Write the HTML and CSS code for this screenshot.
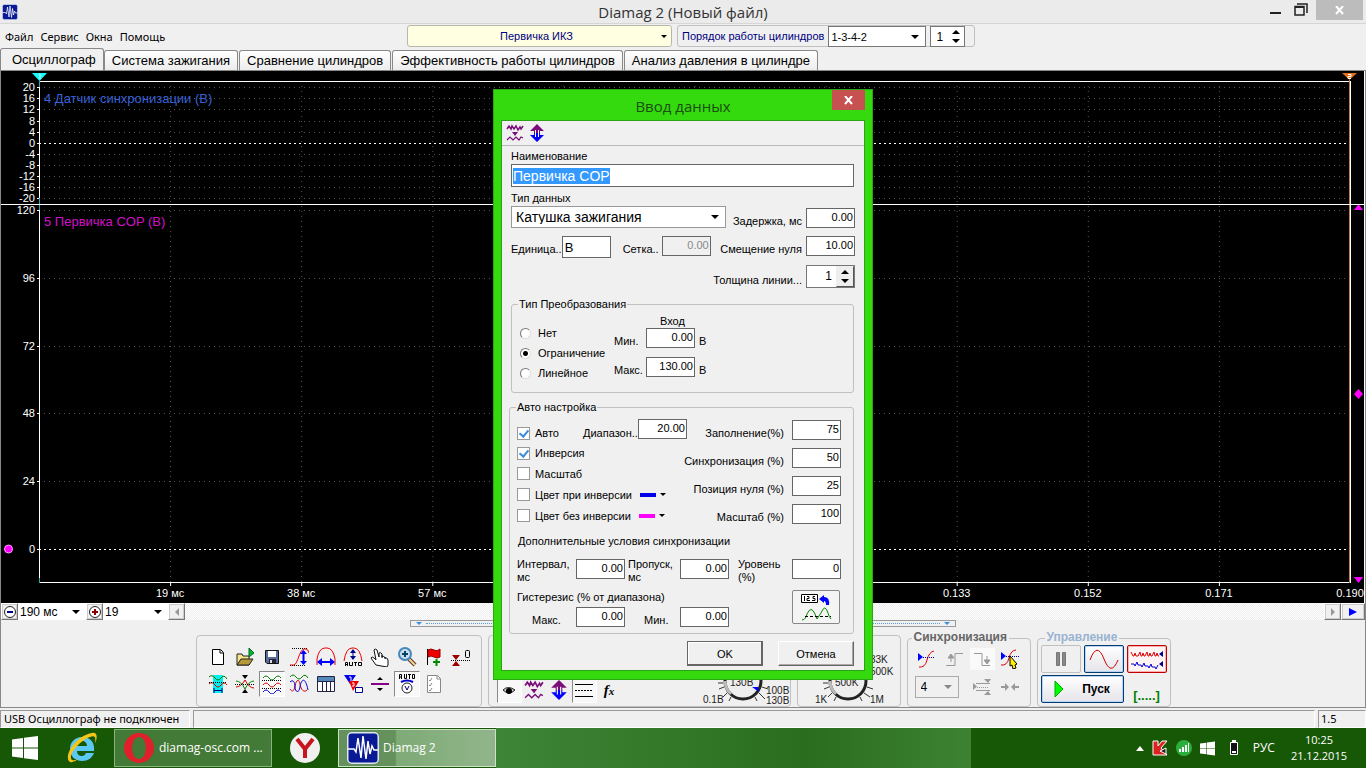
FILE: index.html
```html
<!DOCTYPE html>
<html lang="ru">
<head>
<meta charset="utf-8">
<title>Diamag 2 (Новый файл)</title>
<link rel="stylesheet" href="styles.css">
</head>
<body>
<svg class="defs" aria-hidden="true">
  <symbol id="i-waves" viewBox="0 0 18 18"><path d="M1 5l2-3 2 3 1-3 2 3 2-3 2 4 2-3 1 2 2-3" fill="none" stroke="#7a0d7a" stroke-width="1.500"/><path d="M6 8h6l-3 4z" fill="#7a0d7a"/><path d="M1 16l3-3 3 3 3-3 3 3 2-3 2 1" fill="none" stroke="#7a0d7a" stroke-width="1.2"/></symbol>
  <symbol id="i-updown" viewBox="0 0 18 18"><path d="M9 0l7 7h-4v2H6V7H2z" fill="#7a0d7a"/><path d="M9 18l7-7h-4V9H6v2H2z" fill="#00f"/><path d="M7 6h1v7H7zM10 6h1v7h-1z" fill="#fff"/></symbol>
  <symbol id="i-win" viewBox="0 0 26 24"><path d="M0 3.500l11-1.500v9.500H0zM12 1.800L26 0v11.500H12zM0 12.500h11V22L0 20.500zM12 12.500h14V24l-14-1.800z" fill="#fff"/></symbol>
  <symbol id="i-app" viewBox="0 0 32 32"><rect x=".75" y=".75" width="30.500" height="30.500" rx="4" fill="#0a1a94" stroke="#dfe4f2" stroke-width="1.500"/><path d="M1 17h6l2 3 2-14 3 20 2-22 3 23 2-18 2 13 2-8 2 4h4" fill="none" stroke="#fff" stroke-width="1.500"/></symbol>
</svg>

<header class="titlebar">
  <svg class="titlebar-icon" viewBox="0 0 32 32"><use href="#i-app"/></svg>
  <h1>Diamag 2 (Новый файл)</h1>
  <div class="window-buttons">
    <button class="win-btn" aria-label="Свернуть"><svg width="12" height="16"><path d="M1 10h11v2H1z" fill="#222"/></svg></button>
    <button class="win-btn" aria-label="Развернуть"><svg width="14" height="14"><path d="M3 1h10v9M1 3.500h9V12H1z" fill="none" stroke="#222" stroke-width="1.500"/><path d="M1 3h9v2H1z" fill="#222"/></svg></button>
    <button class="win-btn win-close" aria-label="Закрыть"><svg width="10" height="9"><path d="M1 0l7 8M8 0L1 8" stroke="#fff" stroke-width="2"/></svg></button>
  </div>
</header>

<div class="toolbar">
  <nav class="menu"><a href="#">Файл</a><a href="#">Сервис</a><a href="#">Окна</a><a href="#">Помощь</a></nav>
  <button class="preset"><span>Первичка ИКЗ</span><i class="arrow small"></i></button>
  <div class="order">
    <label for="order">Порядок работы цилиндров</label>
    <span class="select order-select"><select id="order"><option>1-3-4-2</option></select></span>
    <span class="spin"><input id="cyl" aria-label="Цилиндр" value="1"><i class="spin-arrows"></i></span>
  </div>
</div>

<div class="tabs" role="tablist">
  <button role="tab" class="tab active">Осциллограф</button>
  <button role="tab" class="tab">Система зажигания</button>
  <button role="tab" class="tab">Сравнение цилиндров</button>
  <button role="tab" class="tab">Эффективность работы цилиндров</button>
  <button role="tab" class="tab">Анализ давления в цилиндре</button>
</div>

<main class="scope">
  <svg class="plot" role="img" aria-label="Осциллограмма">
    <g class="axis y-axis">
      <text x="34" y="20">20</text><text x="34" y="31">16</text><text x="34" y="42">12</text><text x="34" y="54">8</text><text x="34" y="65">4</text><text x="34" y="76">0</text><text x="34" y="87">-4</text><text x="34" y="98">-8</text><text x="34" y="109">-12</text><text x="34" y="120">-16</text><text x="34" y="131">-20</text>
      <text x="34" y="143">120</text><text x="34" y="211">96</text><text x="34" y="279">72</text><text x="34" y="346">48</text><text x="34" y="414">24</text><text x="34" y="482">0</text>
    </g>
    <path class="frame" d="M36 16.500h3M36 27.500h3M36 38.500h3M36 50.500h3M36 61.500h3M36 72.500h3M36 83.500h3M36 94.500h3M36 105.500h3M36 116.500h3M36 127.500h3M36 139.500h3M36 207.500h3M36 275.500h3M36 342.500h3M36 410.500h3M36 478.500h3"/>
    <svg class="area" x="38" y="0" height="532">
      <g class="grid">
        <line x2="100%" y1="16.500" y2="16.500"/><line x2="100%" y1="27.500" y2="27.500"/><line x2="100%" y1="38.500" y2="38.500"/><line x2="100%" y1="50.500" y2="50.500"/><line x2="100%" y1="61.500" y2="61.500"/><line x2="100%" y1="83.500" y2="83.500"/><line x2="100%" y1="94.500" y2="94.500"/><line x2="100%" y1="105.500" y2="105.500"/><line x2="100%" y1="116.500" y2="116.500"/><line x2="100%" y1="127.500" y2="127.500"/><line x2="100%" y1="139.500" y2="139.500"/><line x2="100%" y1="207.500" y2="207.500"/><line x2="100%" y1="275.500" y2="275.500"/><line x2="100%" y1="342.500" y2="342.500"/><line x2="100%" y1="410.500" y2="410.500"/>
        <g transform="translate(.5)"><line x1="10%" x2="10%" y1="15" y2="511"/><line x1="20%" x2="20%" y1="15" y2="511"/><line x1="30%" x2="30%" y1="15" y2="511"/><line x1="40%" x2="40%" y1="15" y2="511"/><line x1="50%" x2="50%" y1="15" y2="511"/><line x1="60%" x2="60%" y1="15" y2="511"/><line x1="70%" x2="70%" y1="15" y2="511"/><line x1="80%" x2="80%" y1="15" y2="511"/><line x1="90%" x2="90%" y1="15" y2="511"/></g>
      </g>
      <g class="zero"><line x2="100%" y1="72.500" y2="72.500"/><line x2="100%" y1="478.500" y2="478.500"/></g>
      <g class="frame"><line x2="100%" y1="10.500" y2="10.500"/><line x2="100%" y1="511.500" y2="511.500"/><line x1=".5" x2=".5" y1="10" y2="512"/></g>
      <g class="frame" transform="translate(.5)"><line x1="100%" x2="100%" y1="10" y2="512"/><line x1="10%" x2="10%" y1="511" y2="515"/><line x1="20%" x2="20%" y1="511" y2="515"/><line x1="30%" x2="30%" y1="511" y2="515"/><line x1="70%" x2="70%" y1="511" y2="515"/><line x1="80%" x2="80%" y1="511" y2="515"/><line x1="90%" x2="90%" y1="511" y2="515"/></g>
      <g class="axis x-axis"><text x="10%" y="526">19 мс</text><text x="20%" y="526">38 мс</text><text x="30%" y="526">57 мс</text><text x="70%" y="526">0.133</text><text x="80%" y="526">0.152</text><text x="90%" y="526">0.171</text><text x="100%" y="526">0.190</text></g>
      <text class="channel ch4" x="5" y="32">4 Датчик синхронизации (В)</text>
      <text class="channel ch5" x="5" y="155">5 Первичка COP (В)</text>
      <path d="M-7 2H8L.5 10z" fill="#1ff"/><path d="M0 3h1v5" stroke="#fff" fill="none"/><path d="M.5 10v6M.5 127v12M.5 507v5" stroke="#2aa"/>
      <svg x="100%" overflow="visible"><path d="M-.5 9v503" stroke="#c87850"/><path d="M-8 2H7l-7.500 7z" fill="#e07020"/><path d="M-2 3.500h3v2h-3v2h3" stroke="#fff" fill="none"/><path d="M4 139h9l-4.500-6zM4 506h9l-4.500 6zM4 323l4.500-5 4.500 5-4.500 5z" fill="#f0f"/></svg>
    </svg>
    <line class="frame" x1="0" x2="100%" y1="133.500" y2="133.500"/>
    <circle cx="7.500" cy="478" r="4" fill="#f0f" stroke="#ffa0ff"/>
  </svg>

  <div class="scroll-row">
    <button class="bevel" aria-label="Уменьшить"><svg width="14" height="14"><circle cx="7" cy="7" r="5.500" fill="#fff" stroke="#222"/><path d="M4 6h6v2H4z" fill="#008"/></svg></button>
    <span class="select flat scale-select"><select aria-label="Масштаб времени"><option>190  мс</option></select></span>
    <button class="bevel" aria-label="Увеличить"><svg width="14" height="14"><circle cx="7" cy="7" r="5.500" fill="#fff" stroke="#222"/><path d="M4 6h6v2H4zM6 4h2v6H6z" fill="#800"/></svg></button>
    <span class="select flat step-select"><select aria-label="Шаг"><option>19</option></select></span>
    <button class="bevel" aria-label="Влево"><svg width="8" height="8"><path d="M6 0v8L2 4z" fill="#999"/></svg></button>
    <div class="track"></div>
    <button class="bevel" aria-label="Вправо"><svg width="8" height="8"><path d="M2 0v8l4-4z" fill="#999"/></svg></button>
    <button class="bevel wide" aria-label="В конец"><svg width="8" height="8"><path d="M0 0v8l8-4z" fill="#00f"/></svg></button>
  </div>

  <div class="bottom">
    <div class="splitter"><i></i><b></b><i></i></div>
    <div class="groups">
      <section class="group tools">
        <button aria-label="Новый"><svg viewBox="0 0 20 20"><path d="M4.500 2.500h8l3 3v12h-11z" fill="#fff" stroke="#000"/><path d="M12 3v3h3" fill="none" stroke="#000"/></svg></button>
        <button aria-label="Открыть"><svg viewBox="0 0 20 20"><path d="M2 18V7h5l1 2h6v9z" fill="#f4e48a" stroke="#222"/><path d="M2 18l4-6h12l-4 6z" fill="#b59a3a" stroke="#222"/><path d="M14 1v9l5-4z" fill="#0b2" stroke="#063"/></svg></button>
        <button aria-label="Сохранить"><svg viewBox="0 0 20 20"><path d="M3.500 3.500h13v13H5l-1.500-1.500z" fill="#5a6c9c" stroke="#111"/><path d="M6 4h8v6H6z" fill="#fff"/><path d="M7 12h7v4H7z" fill="#223"/><path d="M8 13h2v3H8z" fill="#ddd"/></svg></button>
        <button aria-label="Масштаб по высоте"><svg viewBox="0 0 20 20"><path d="M3 1.500h16M1 18.500h15" stroke="#000" stroke-dasharray="1 1"/><path d="M1 18h4c4-1 5-15 10-16h2q2 0 3 4" fill="none" stroke="#e00"/><path d="M14.500 4v12" stroke="#00f" stroke-width="2"/><path d="M11 7h7l-3.500-4zM11 14h7l-3.500 4z" fill="#00f"/></svg></button>
        <button aria-label="Масштаб по ширине"><svg viewBox="0 0 20 20"><path d="M1 18V12Q3 1 9 1h2q6 0 8 11v6" fill="none" stroke="#e00"/><path d="M4 15h12" stroke="#00f" stroke-width="2"/><path d="M6 11v8l-5-4zM14 11v8l5-4z" fill="#00f"/></svg></button>
        <button aria-label="Авто"><svg viewBox="0 0 20 20"><path d="M1 14Q3 1 9 1h2q6 0 8 13" fill="none" stroke="#e00"/><path d="M10 3v9" stroke="#008"/><path d="M7 6h6l-3-4zM7 9h6l-3 4z" fill="#008"/><path d="M2.500 19v-3.500h2V19M2.500 17.500h2M6.500 15v3.500h3V15M11 15.500h3M12.500 15v4M15.500 15.500h3v3h-3z" fill="none" stroke="#000"/></svg></button>
        <button aria-label="Рука"><svg viewBox="0 0 20 20"><path d="M6 18l-5-7q1-2 3 0l2 2-2-10q1-2 3 0l2 7V6q2-1 3 1v3q2-2 3 1 2-1 3 2v5l-1 2z" fill="#fff" stroke="#111"/><path d="M12 8v3M15 10v2" stroke="#111"/></svg></button>
        <button aria-label="Лупа"><svg viewBox="0 0 20 20"><path d="M12 12l6 6" stroke="#633" stroke-width="4"/><path d="M12 12l6 6" stroke="#ed8" stroke-width="2"/><circle cx="8" cy="7" r="6" fill="#cde" stroke="#48b" stroke-width="2"/><path d="M5 7h6M8 4v6" stroke="#046" stroke-width="2"/></svg></button>
        <button aria-label="Маркер"><svg viewBox="0 0 20 20"><path d="M3.500 2v16" stroke="#000"/><path d="M4 3q3-2 6 0t6-1v8q-3 2-6 0t-6 0z" fill="#e00" stroke="#900"/><path d="M9 15h7M12.500 12v7" stroke="#080" stroke-width="2"/></svg></button>
        <button aria-label="Ноль"><svg viewBox="0 0 20 20"><path d="M1 8h8l-4 5zM1 19h8l-4-5z" fill="#900"/><path d="M0 13.500h20" stroke="#000" stroke-dasharray="1 1"/><rect x="14.500" y="3.500" width="4" height="7" rx="1" fill="none" stroke="#000"/></svg></button>
        <button aria-label="Выделение"><svg viewBox="0 0 20 20"><path d="M5 1h10v18H5z" fill="#0ee"/><path d="M1 3q3-3 6 1t6 0 6 1" fill="none" stroke="#070"/><path d="M1 10q3-3 6 1t6 0 6 0" fill="none" stroke="#c00"/><path d="M1 8.500h18" stroke="#000" stroke-dasharray="1 1"/><path d="M6 14v5M14 14v5M6 16.500h8" stroke="#008"/></svg></button>
        <button aria-label="Инверсия"><svg viewBox="0 0 20 20"><path d="M1 13q5 0 9-7 4 8 9 8" fill="none" stroke="#c00"/><path d="M1 7q5 0 9 8 4-8 9-8" fill="none" stroke="#080"/><path d="M0 10.500h20" stroke="#000" stroke-dasharray="1 1"/><path d="M7 1h6l-3 4zM7 19h6l-3-4z" fill="#000"/></svg></button>
        <button class="pressed" aria-label="Раздельно"><svg viewBox="0 0 20 20"><path d="M1 4q3-4 6 0t6 0 6 0" fill="none" stroke="#070"/><path d="M1 11q3-4 6 0t6 0 6 0" fill="none" stroke="#d00"/><path d="M1 18q3-4 6 0t6 0 6 0" fill="none" stroke="#00d"/><path d="M0 6.500h20M0 14.500h20" stroke="#000" stroke-dasharray="1 1"/></svg></button>
        <button aria-label="Совместно"><svg viewBox="0 0 20 20"><path d="M1 3q3-4 6 0t6 0 6 1" fill="none" stroke="#070"/><path d="M1 15C3 18 5 18 6 12s4-8 5-2 4 9 7 6" fill="none" stroke="#d00"/><path d="M1 8c3-3 5 0 5 5s4 7 5 0 5-12 8 3" fill="none" stroke="#00d"/></svg></button>
        <button aria-label="Таблица"><svg viewBox="0 0 20 20"><path d="M1.500 2.500h17v15h-17z" fill="#fff" stroke="#224"/><path d="M2 3h16v4H2z" fill="#58b"/><path d="M2 7.500h16M6.500 7v10M10.500 7v10M14.500 7v10" stroke="#224"/></svg></button>
        <button aria-label="Маркеры"><svg viewBox="0 0 20 20"><path d="M1 1h12L7 10z" fill="#00e"/><path d="M6 7h10l-6 10z" fill="#e00"/><path d="M6 3h2v4M9 9h2v3h-2" fill="none" stroke="#fff"/><path d="M12.500 13.500h7v5h-7z" fill="#fff" stroke="#008"/></svg></button>
        <button aria-label="Разделитель"><svg viewBox="0 0 20 20"><path d="M1 9h18v2H1z" fill="#808"/><path d="M7 6h6l-3-3zM7 14h6l-3 3z" fill="#000"/></svg></button>
        <button class="pressed" aria-label="Авто синхронизация"><svg viewBox="0 0 20 20"><path d="M2.500 5V.500h2V5M2.500 3h2M7.500 0v4.500h2V0M11 .500h3M12.500 0v5M15.500.500h2v4h-2z" fill="none" stroke="#000"/><path d="M4 8q6-3 12 0" fill="none" stroke="#00c" stroke-width="2"/><circle cx="10" cy="14" r="5" fill="#fff" stroke="#222"/><path d="M8 12l2 4 2-4" fill="none" stroke="#008"/></svg></button>
        <button aria-label="Список"><svg viewBox="0 0 20 20"><path d="M3.500 1.500h10l3 3v14h-13z" fill="#fff" stroke="#888"/><path d="M5 6l1 1 2-3M5 11l1 1 2-3M5 16l1 1 2-3M13 2v3h3" fill="none" stroke="#888"/></svg></button>
      </section>

      <section class="group view">
        <button class="pressed" aria-label="Показать"><svg viewBox="0 0 20 20"><path d="M4 10q5-5 12 0-6 6-12 0z" fill="#ccc" stroke="#222"/><circle cx="10" cy="11" r="3" fill="#000"/></svg></button>
        <button aria-label="Усреднение"><svg><use href="#i-waves"/></svg></button>
        <button aria-label="Растянуть"><svg><use href="#i-updown"/></svg></button>
        <button class="pressed" aria-label="Линии"><svg viewBox="0 0 20 20"><path d="M1 4.500h18M1 16.500h18" stroke="#000"/><path d="M1 10.500h18" stroke="#000" stroke-dasharray="2 1"/></svg></button>
        <button class="fx"><span>f<small>x</small></span></button>
        <svg class="knob" viewBox="0 0 100 70">
          <circle cx="50" cy="45" r="18" class="knob-ring"/><path d="M32 45A18 18 0 0 0 38 58" class="knob-hi"/>
          <path d="M30 47h-5M31 51l-5 2M34 57l-4 4M38 61l-2 4M66 57l6 6M69 51l6 2M62 61l2 4" class="knob-ticks"/><path d="M66 56l-7-5h6z" fill="#00f"/>
          <text x="37" y="50">130В</text><text x="10" y="67">0.1В</text><text x="73" y="58">100В</text><text x="73" y="68">130В</text>
        </svg>
      </section>

      <section class="group input">
        <svg class="knob" viewBox="0 0 100 70">
          <circle cx="50" cy="45" r="18" class="knob-ring"/><path d="M32 45A18 18 0 0 0 38 58" class="knob-hi"/>
          <path d="M30 47h-5M31 51l-5 2M34 57l-4 4M38 61l-2 4M66 57l6 4M69 51l6 2M62 61l2 4" class="knob-ticks"/>
          <text x="37" y="50">500K</text><text x="17" y="67">1K</text><text x="72" y="67">1М</text><text x="72" y="27">33K</text><text x="72" y="39">500K</text>
        </svg>
      </section>

      <fieldset class="group sync">
        <legend>Синхронизация</legend>
        <div class="sync-row">
          <button aria-label="Фронт"><svg viewBox="0 0 20 20"><path d="M2 18q6 1 8-7t7-9" fill="none" stroke="#d00"/><path d="M1 4v8l5-4z" fill="#00f"/><path d="M6 8.500h12" stroke="#00a" stroke-dasharray="1 1"/></svg></button>
          <button aria-label="По нарастанию"><svg viewBox="0 0 20 20"><path d="M1 16.500h9v-12h8M10 4" fill="none" stroke="#999"/><path d="M3 9l3-4 3 4zM6 8v5" fill="#999" stroke="#999"/></svg></button>
          <button class="dither" aria-label="По спаду"><svg viewBox="0 0 20 20"><path d="M2 4.500h8v12h8" fill="none" stroke="#999"/><path d="M12 11l3 4 3-4zM15 7v5" fill="#999" stroke="#999"/></svg></button>
          <button aria-label="Указать"><svg viewBox="0 0 20 20"><path d="M1 16q6 1 8-7t7-8" fill="none" stroke="#d00"/><path d="M1 3v8l5-4z" fill="#00f"/><path d="M6 7.500h13" stroke="#00a" stroke-dasharray="1 1"/><path d="M10 7l7 8-2 1 1 3-3 1-1-4-2 1z" fill="#fe0" stroke="#000"/></svg></button>
        </div>
        <div class="sync-row">
          <span class="select sync-select"><select aria-label="Канал"><option>4</option></select></span>
          <button aria-label="Уровень"><svg viewBox="0 0 20 20"><path d="M1 6v7l4-3.500zM12 2h7l-3 4zM12 18h7l-3-4z" fill="#999"/><path d="M4 6.500h14M4 13.500h14" stroke="#999"/><path d="M5 10.500h12" stroke="#999" stroke-dasharray="1 1"/></svg></button>
          <button aria-label="Сдвинуть"><svg viewBox="0 0 20 20"><path d="M1 9h4V6l4 4-4 4v-3H1zM19 9h-4V6l-4 4 4 4v-3h4z" fill="#999"/></svg></button>
        </div>
      </fieldset>

      <fieldset class="group control">
        <legend>Управление</legend>
        <button class="ctl off" aria-label="Пауза"><svg width="12" height="16"><path d="M1.500 1.500h3v13h-3zM7.500 1.500h3v13h-3z" fill="#888" stroke="#777"/></svg></button>
        <button class="ctl" aria-label="Один кадр"><svg width="30" height="20"><path d="M1 11Q8-8 15 10t14 1" fill="none" stroke="#c00"/></svg></button>
        <button class="ctl red" aria-label="Самописец"><svg width="34" height="20"><path d="M1 3l2 4h1l1-3 1 3h2l2-4 1 4h1l1-3 1 3h1l2-4 1 4h1l1-3 1 3h1l2-4 1 4h1l1-3 1 3h1" fill="none" stroke="#d00"/><path d="M1 15h3l1 2 2-4 1 3h3l1 2 2-4 1 3h3l1 2 2-4 1 3h3l1 2 2-4" fill="none" stroke="#00d"/><path d="M33 2v6l-4-3zM33 12v6l-4-3z" fill="#008"/></svg></button>
        <button class="ctl start"><svg width="10" height="18"><path d="M1 1v16l8-8z" fill="#0f0" stroke="#0a0"/></svg><span>Пуск</span></button>
        <button class="range">[.....]</button>
      </fieldset>
    </div>
  </div>
</main>

<footer class="status"><span class="cell first">USB Осциллограф не подключен</span><span class="cell mid"></span><span class="cell last">1.5</span></footer>

<div class="taskbar">
  <button class="task-icon start-btn" aria-label="Пуск"><svg width="26" height="24"><use href="#i-win"/></svg></button>
  <button class="task-icon ie" aria-label="Internet Explorer"><svg width="32" height="32" viewBox="0 0 32 32"><path d="M16 5C9 5 4 10 4 17s5 12 12 12c6 0 10-3 12-8h-8c-1 2-2 3-4 3-3 0-5-2-5-5h17C29 10 24 5 16 5zm-5 9c0-3 2-5 5-5s5 2 5 5z" fill="#5cc8f4" fill-rule="evenodd"/><path d="M4 30C-3 26 8 4 26 1c5-1 6 4 3 10 1-6 0-8-5-6C14 8 1 24 6 28q2 1 6-1-4 4-8 3z" fill="#f5c518"/></svg></button>
  <button class="task opera"><svg width="32" height="32" viewBox="0 0 32 32"><path d="M16 1a15 15 0 1 0 0 30 15 15 0 0 0 0-30zm0 4c9 0 9 22 0 22s-9-22 0-22z" fill="#e0202a" fill-rule="evenodd"/></svg><span>diamag-osc.com ...</span></button>
  <button class="task-icon yandex" aria-label="Яндекс"><svg width="32" height="32"><circle cx="16" cy="16" r="15" fill="#f0f0f0"/><path d="M8 7l8 10 8-10M16 16v10" fill="none" stroke="#c8141c" stroke-width="4"/></svg></button>
  <button class="task current"><svg width="32" height="32"><use href="#i-app"/></svg><span>Diamag 2</span></button>
  <div class="task-fill"></div>
  <div class="tray">
    <svg width="8" height="5"><path d="M0 5h8L4 0z" fill="#fff"/></svg>
    <svg width="16" height="16"><path d="M1 1h5v5l4-5h5L9 8l6 7H1z" fill="#d22" stroke="#fff"/><path d="M8 11l6-3v6z" fill="#222" stroke="#fff"/></svg>
    <svg width="16" height="16"><circle cx="8" cy="8" r="8" fill="#2cae3c"/><path d="M3 9h2v3H3zM6 7h2v5H6zM9 5h2v7H9zM12 3h1v9h-1z" fill="#fff"/></svg>
    <svg width="15" height="15"><use href="#i-win"/></svg>
    <svg class="battery" width="10" height="16"><path d="M1.500 2.500h7v12h-7z" fill="#111" stroke="#fff"/><path d="M3 0h4v2H3zM3 11h4v2H3z" fill="#fff"/></svg>
    <span class="lang">РУС</span>
    <time>10:25<br>21.12.2015</time>
  </div>
</div>

<form class="dialog" role="dialog" aria-labelledby="dlg-title">
  <div class="dialog-title"><h2 id="dlg-title">Ввод данных</h2><button type="button" class="dialog-close" aria-label="Закрыть"><svg width="10" height="9"><path d="M1 0l7 8M8 0L1 8" stroke="#fff" stroke-width="2"/></svg></button></div>
  <div class="dialog-body">
    <div class="dialog-tools"><button type="button" aria-label="Усреднение"><svg><use href="#i-waves"/></svg></button><button type="button" aria-label="Растянуть"><svg><use href="#i-updown"/></svg></button></div>
    <div class="fields">
      <label class="caption" for="name">Наименование</label>
      <input id="name" class="name" value="Первичка COP">
      <label class="caption second" for="dtype">Тип данных</label>
      <div class="line type-line">
        <span class="select type-select"><select id="dtype"><option>Катушка зажигания</option></select></span>
        <label class="tah push" for="delay">Задержка, мс</label><input id="delay" class="num" value="0.00">
      </div>
      <div class="line unit-line">
        <label class="tah" for="unit">Единица..</label><input id="unit" class="unit" value="В">
        <label class="tah grid-label" for="gridv">Сетка..</label><input id="gridv" class="num" value="0.00" disabled>
        <label class="tah push" for="offset">Смещение нуля</label><input id="offset" class="num" value="10.00">
      </div>
      <div class="line width-line"><label class="tah push" for="lw">Толщина линии...</label><span class="spin raised"><input id="lw" value="1"><i class="spin-arrows"></i></span></div>
    </div>

    <fieldset class="box transform-box">
      <legend>Тип Преобразования</legend>
      <div class="radios">
        <label><input type="radio" name="t">Нет</label>
        <label><input type="radio" name="t" checked>Ограничение</label>
        <label><input type="radio" name="t">Линейное</label>
      </div>
      <div class="limits">
        <span class="head">Вход</span>
        <label class="tah" for="lmin">Мин.</label><input id="lmin" class="num" value="0.00"><span class="u">В</span>
        <label class="tah" for="lmax">Макс.</label><input id="lmax" class="num" value="130.00"><span class="u">В</span>
      </div>
    </fieldset>

    <fieldset class="box auto-box">
      <legend>Авто настройка</legend>
      <div class="auto-cols">
        <div class="checks">
          <div class="check-row"><label><input type="checkbox" checked>Авто</label><label class="tah range-label" for="rng">Диапазон..</label><input id="rng" class="num" value="20.00"></div>
          <label><input type="checkbox" checked>Инверсия</label>
          <label><input type="checkbox">Масштаб</label>
          <div class="check-row"><label><input type="checkbox">Цвет при инверсии</label><button type="button" class="color blue" aria-label="Синий"><i class="arrow small"></i></button></div>
          <div class="check-row"><label><input type="checkbox">Цвет без инверсии</label><button type="button" class="color pink" aria-label="Розовый"><i class="arrow small"></i></button></div>
        </div>
        <div class="percents">
          <label class="tah" for="p1">Заполнение(%)</label><input id="p1" class="num" value="75">
          <label class="tah" for="p2">Синхронизация (%)</label><input id="p2" class="num" value="50">
          <label class="tah" for="p3">Позиция нуля (%)</label><input id="p3" class="num" value="25">
          <label class="tah" for="p4">Масштаб (%)</label><input id="p4" class="num" value="100">
        </div>
      </div>
      <p class="sub">Дополнительные условия синхронизации</p>
      <div class="conds">
        <label class="tah" for="c1">Интервал,<br>мс</label><input id="c1" class="num" value="0.00">
        <label class="tah" for="c2">Пропуск,<br>мс</label><input id="c2" class="num" value="0.00">
        <label class="tah" for="c3">Уровень<br>(%)</label><input id="c3" class="num" value="0">
      </div>
      <div class="hyst">
        <div class="hyst-left">
          <p class="sub">Гистерезис (% от диапазона)</p>
          <div class="hyst-row"><label class="tah" for="h1">Макс.</label><input id="h1" class="num" value="0.00"><label class="tah" for="h2">Мин.</label><input id="h2" class="num" value="0.00"></div>
        </div>
        <button type="button" class="calc" aria-label="Рассчитать"><svg width="32" height="28"><path d="M1.500 1.500h16v8h-16z" fill="#fff" stroke="#000"/><path d="M4.500 3v5M7 3.500h2v2H7v2h3M12 7.500h3v-2h-2v-2h2" fill="none" stroke="#000"/><path d="M19 6l5-4v2q6 0 5 8h-3q0-4-2-4v2z" fill="#00f"/><path d="M2 27c3 0 4-3 5-6q4-9 8 0l2 5 4-6q4-10 7 0 1 4 3 6" fill="none" stroke="#080"/><path d="M5 23.500h26" stroke="#000" stroke-dasharray="3 2"/></svg></button>
      </div>
    </fieldset>

    <div class="actions"><button type="button" class="push-btn default">OK</button><button type="button" class="push-btn">Отмена</button></div>
  </div>
</form>
<script>
document.getElementById('name').select();
</script>
</body>
</html>
```
FILE: styles.css
```css
* { box-sizing: border-box; }
body {
  margin: 0; min-height: 100vh; display: flex; flex-direction: column; position: relative;
  background: #f0f0f0; color: #000; font: 11px/14px "Liberation Sans", Arial, sans-serif; overflow-x: hidden;
}
button, input, select { font: inherit; color: inherit; margin: 0; padding: 0; border: 0; background: none; border-radius: 0; outline: 0; }
h1, h2, p { margin: 0; font-weight: normal; }
fieldset { margin: 0; padding: 0; min-width: 0; }
svg { display: block; }
.defs { position: absolute; width: 0; height: 0; }

.titlebar { height: 24px; display: grid; grid-template-columns: 1fr auto 1fr; background: #ebebeb; border-bottom: 1px solid #d6d6d6; }
.titlebar-icon { width: 16px; height: 16px; margin: 4px 0 0 2px; }
.titlebar h1 { font: 15px/24px "Open Sans", sans-serif; color: #333; }
.window-buttons { display: flex; justify-content: flex-end; align-items: flex-start; padding-right: 3px; }
.win-btn { width: 26px; height: 20px; display: grid; place-items: center; }
.win-close { width: 47px; margin-left: 2px; background: #bcbcbc; }

.toolbar { height: 24px; display: grid; grid-template-columns: 407px 265px auto 1fr; align-items: start; padding-top: 1px; }
.menu { display: flex; gap: 7px; padding: 5px 0 0 5px; font: 11px/14px "Noto Sans", sans-serif; }
.menu a { color: #000; text-decoration: none; }
.preset { height: 22px; display: flex; align-items: center; padding: 0 4px; background: #ffffe1; border: 1px solid #b8b8a8; border-radius: 3px; color: #000080; }
.preset span { flex: 1; }
.order { height: 22px; margin-left: 5px; display: flex; align-items: flex-start; gap: 4px; border: 1px solid #c0c0c0; border-radius: 3px; padding: 0 9px 0 4px; color: #000080; }
.order label { line-height: 20px; }
.arrow { width: 0; height: 0; border: 4px solid transparent; border-top-color: #000; border-bottom: 0; }
.arrow.small { border-width: 3px; border-bottom: 0; }
.select { position: relative; display: inline-flex; background: #fff; border: 1px solid #777; color: #000; }
.select select { appearance: none; width: 100%; height: 100%; padding: 0 4px; }
.select::after { content: ""; position: absolute; right: 6px; top: 50%; margin-top: -2px; border: 4px solid transparent; border-top-color: #000; border-bottom: 0; pointer-events: none; }
.order-select { width: 98px; height: 21px; }
.order-select select { padding-left: 2px; }
.spin { display: inline-flex; align-items: center; width: 35px; height: 21px; border: 1px solid #777; background: #fff; color: #000; }
.spin input { flex: 1; min-width: 0; text-align: center; font-size: 12px; }
.spin-arrows { width: 16px; height: 13px; flex: none; display: flex; flex-direction: column; align-items: center; justify-content: space-between; }
.spin-arrows::before, .spin-arrows::after { content: ""; border: 4px solid transparent; }
.spin-arrows::before { border-bottom-color: #000; border-top: 0; }
.spin-arrows::after { border-top-color: #000; border-bottom: 0; }

.tabs { height: 23px; display: flex; align-items: flex-end; gap: 1px; border-bottom: 1px solid #888; font-size: 13px; }
.tab { height: 20px; padding: 0 7px; border: 1px solid #888; border-bottom: 0; border-radius: 3px 3px 0 0; background: linear-gradient(#fff, #ececec); white-space: nowrap; }
.tab.active { height: 22px; padding: 0 7px 0 11px; background: #f0f0f0; margin-right: -1px; }

.scope { flex: 1; display: flex; flex-direction: column; border: 1px solid #888; border-top: 0; }
.plot { width: 100%; height: 532px; background: #000; border-right: 1px solid #fff; }
.area { width: calc(100% - 52px); overflow: visible; }
.plot .frame { stroke: #fff; }
.grid { stroke: #555; stroke-dasharray: 1 4; }
.zero { stroke: #fff; stroke-dasharray: 2 3; }
.axis { fill: #fff; font-size: 11px; }
.y-axis { text-anchor: end; }
.x-axis { text-anchor: middle; }
.channel { font-size: 13px; }
.ch4 { fill: #3a62d8; }
.ch5 { fill: #d010c8; }

.scroll-row { height: 17px; display: flex; background: #fff; }
.bevel { width: 17px; height: 17px; display: grid; place-items: center; background: #f0f0f0; border: 1px solid; border-color: #fff #777 #777 #fff; box-shadow: inset 0 0 0 1px #ccc; }
.bevel.wide { width: 24px; }
.select.flat { border: 0; height: 17px; font-size: 12px; white-space: pre; }
.flat select { padding: 0 2px; }
.scale-select { width: 68px; }
.step-select { width: 65px; }
.track { flex: 1; background: repeating-conic-gradient(#eee 0 25%, #fff 0 50%) 0 0 / 2px 2px; }

.bottom { flex: 1; display: flex; flex-direction: column; align-items: center; }
.splitter { width: 40%; height: 7px; display: flex; align-items: center; gap: 4px; padding: 0 5px; border: 1px solid #999; }
.splitter i { border: 3px solid transparent; border-top-color: #3a8ee0; border-bottom: 0; }
.splitter b { flex: 1; border-top: 1px dotted #5a9ee0; }
.groups { display: flex; justify-content: center; gap: 6px; margin-top: 8px; }
.group { height: 72px; border: 1px solid #c0c0c0; border-radius: 4px; }
.group button:not(.ctl) { display: grid; place-items: center; }
.tools { width: 286px; padding: 8px; display: grid; grid-template-columns: repeat(10, 27px); grid-template-rows: 27px 26px; }
.tools button { width: 26px; height: 26px; }
.tools svg, .view button svg, .sync svg { width: 20px; height: 20px; }
.pressed { border: 1px solid; border-color: #888 #fff #fff #888; background: #f8f8f8; }
.view { width: 303px; padding-left: 8px; display: flex; align-items: flex-end; }
.view button { width: 25px; height: 26px; margin-bottom: 3px; flex: none; }
.view .fx { font: italic bold 15px/20px "Liberation Serif", serif; }
.fx small { font-size: 11px; }
.knob { width: 100px; height: 70px; flex: none; overflow: visible; font-size: 10px; }
.view .knob { margin-left: 71px; }
.input { width: 104px; }
.knob text { fill: #222; }
.knob-ring { fill: #eee; stroke: #222; stroke-width: 3; }
.knob-hi { fill: none; stroke: #bbb; stroke-width: 3; }
.knob-ticks { stroke: #333; fill: none; }
.group legend { margin-left: 4px; padding: 0 2px; height: 6px; line-height: 4px; font-size: 12px; font-weight: bold; color: #666; }
.sync { width: 124px; padding-top: 4px; }
.sync-row { display: flex; gap: 2px; padding: 0 7px; height: 28px; align-items: center; }
.sync-row button { width: 27px; height: 22px; }
.dither { background: #fafafa; }
.sync-select { width: 47px; height: 22px; margin-right: 9px; background: #f0f0f0; border-color: #aaa; font-size: 12px; }
.sync-select select { padding-left: 5px; }
.sync-select::after { border-top-color: #888; }
.control { width: 134px; display: grid; grid-template-columns: repeat(3, 40px); grid-template-rows: 28px 28px; gap: 2px 3px; padding: 4px 3px 0; }
.control legend { color: #98b4d0; }
.ctl { display: flex; align-items: center; justify-content: center; border: 1px solid #003c74; border-radius: 2px; background: linear-gradient(#fff, #e4e4ea); box-shadow: inset 0 0 0 1px #b8d4f4; }
.ctl.off { border-color: #c0c0c0; background: #f0f0f0; box-shadow: none; }
.ctl.red { border-color: #c00000; background: #fff4f4; box-shadow: inset 0 0 0 1px #ffb0b0; }
.ctl.start { grid-column: span 2; gap: 18px; font-size: 12px; font-weight: bold; }
.control .range { color: #008000; font-weight: bold; font-size: 13px; align-self: end; justify-self: center; }

.status { height: 18px; display: flex; gap: 3px; margin-top: 2px; font: 11px/15px "Noto Sans", sans-serif; }
.cell { border: 1px solid; border-color: #999 #fff #fff #999; padding: 0 3px; white-space: nowrap; }
.first { width: 190px; }
.mid { flex: 1; }
.last { width: 48px; padding-left: 2px; }

.taskbar { height: 40px; display: flex; align-items: center; background: #175806; color: #fff; font: 12px/16px "Open Sans", sans-serif; }
.task-icon { display: grid; place-items: center; }
.start-btn { width: 50px; }
.ie { width: 64px; }
.yandex { width: 66px; }
.task { width: 158px; height: 38px; display: flex; align-items: center; gap: 4px; padding: 0 8px; border: 1px solid #8ab280; background: #447a37; white-space: nowrap; }
.current { border-color: #d0e0c8; background: linear-gradient(90deg, #65925c 36%, #7eab76 37%, #91b58b); }
.task-fill { width: 475px; flex: 0 1 475px; height: 40px; background: linear-gradient(90deg, #3f8537, #2a6d1e 65%, #3d8133); }
.tray { flex: 1; display: flex; align-items: center; justify-content: flex-end; gap: 8px; padding-right: 19px; }
.battery { margin-left: 6px; }
.lang { margin: 0 8px 0 6px; }
time { text-align: center; font-size: 11px; }

/* Data entry dialog */
.dialog { position: absolute; left: calc(50% - 190px); top: 89px; width: 380px; padding: 0 7px 8px; background: #34da0e; border: 1px solid #28a812; }
.dialog-title { height: 30px; position: relative; }
.dialog-title h2 { text-align: center; font: 15px/32px "Open Sans", sans-serif; color: #1c4e12; }
.dialog-close { position: absolute; right: 0; top: 0; width: 33px; height: 20px; display: grid; place-items: center; background: #c75050; }
.dialog-body { background: #f0f0f0; border: 1px solid #2ba312; padding-bottom: 4px; }
.dialog-tools { height: 25px; display: flex; gap: 4px; padding: 3px 4px; border-bottom: 1px solid #b8b8b8; }
.dialog-tools svg { width: 18px; height: 18px; }
.tah { white-space: nowrap; }
.fields { padding: 2px 9px 0; }
.caption { display: block; line-height: 16px; }
.name { width: 343px; height: 23px; border: 1px solid #666; background: #fff; padding: 0 1px; font-size: 14px; }
.name::selection { background: #3399ff; color: #fff; }
.second { margin-top: 3px; }
.line { display: flex; align-items: flex-end; }
.push { margin-left: auto; margin-right: 4px; }
.type-line { height: 22px; }
.type-select { width: 215px; height: 22px; border-color: #999; font-size: 14px; align-self: flex-start; }
.num { width: 49px; height: 20px; border: 1px solid #666; background: #fff; text-align: right; padding: 0 1px 2px; flex: none; }
.num:disabled { color: #888; background: #f0f0f0; }
.unit-line { margin-top: 8px; height: 22px; align-items: flex-start; }
.unit-line label { margin-top: 6px; }
.unit { width: 49px; height: 22px; border: 1px solid #666; background: #fff; padding: 0 2px; font-size: 13px; }
.grid-label { margin-left: 12px; margin-right: 3px; }
.width-line { margin-top: 7px; height: 22px; align-items: center; }
.width-line label { margin-top: 8px; }
.raised { width: 49px; height: 23px; }
.raised .spin-arrows { width: 18px; height: 21px; padding: 3px 0; background: #eee; border: 1px solid; border-color: #eee #555 #555 #eee; }
.raised input { text-align: right; padding-right: 4px; }
.box { border: 1px solid #c0c0c0; border-radius: 3px; }
.box legend { margin-left: 6px; padding: 0 1px; line-height: 14px; }
.transform-box { margin: 10px 10px 0 9px; height: 96px; display: flex; }
.radios { padding: 12px 0 0 8px; display: grid; grid-auto-rows: 20px; width: 94px; flex: none; }
.radios label, .checks label { display: flex; align-items: center; white-space: nowrap; }
input[type=radio] { appearance: none; width: 11px; height: 11px; margin-right: 7px; border-radius: 50%; background: #fff; border: 1px solid; border-color: #777 #ddd #ddd #777; }
input[type=radio]:checked { background: radial-gradient(circle, #000 2px, #fff 3px); }
.limits { margin-left: 8px; padding-top: 3px; display: grid; grid-template-columns: 32px 49px auto; grid-template-rows: 14px 29px 29px; }
.limits .head { grid-column: 1 / -1; margin-left: 46px; }
.limits label, .limits .u { margin-top: 6px; }
.limits .u { margin-left: 4px; }
.auto-box { margin: 7px 10px 0 7px; padding: 0 0 6px 7px; }
.auto-box legend { margin-left: -1px; }
.auto-cols { display: grid; grid-template-columns: 160px auto; justify-content: space-between; padding-right: 12px; height: 112px; }
.checks { display: grid; grid-template-rows: 20px 20px 21px 21px 21px; padding-top: 9px; align-content: start; }
.check-row { display: flex; align-items: center; }
.range-label { margin-left: 24px; }
.check-row .num { align-self: flex-start; margin-top: -4px; }
input[type=checkbox] { appearance: none; width: 13px; height: 13px; margin-right: 5px; border: 1px solid #999; background: #fff; display: grid; place-items: center; flex: none; }
input[type=checkbox]:checked::before { content: ""; width: 4px; height: 7px; border: solid #3a8edb; border-width: 0 2px 2px 0; transform: rotate(40deg); margin-top: -2px; }
.color { display: flex; align-items: center; gap: 4px; margin-left: 8px; }
.color::before { content: ""; width: 16px; height: 4px; background: #0000e8; }
.color.pink::before { background: #f0f; }
.percents { display: grid; grid-template-columns: auto 49px; grid-auto-rows: 28px; column-gap: 8px; text-align: right; padding-top: 6px; align-content: start; }
.percents label { margin-top: 6px; }
.sub { line-height: 14px; white-space: nowrap; }
.auto-box > .sub { margin-top: 8px; padding-left: 1px; }
.conds { display: grid; grid-template-columns: 59px 52px 52px 58px 54px 49px; margin-top: 10px; }
.conds label { line-height: 13px; }
.conds .num { margin-top: 1px; }
.hyst { display: flex; justify-content: space-between; padding-right: 13px; margin-top: 6px; }
.hyst-row { display: grid; grid-template-columns: 44px 68px 36px 49px; justify-content: start; padding-left: 15px; margin-top: 3px; }
.hyst-row label { margin-top: 6px; }
.calc { width: 48px; height: 34px; display: grid; place-items: center; border: 1px solid #888; border-radius: 2px; background: #f4f4f4; }
.actions { display: flex; justify-content: flex-end; gap: 15px; padding: 7px 10px 0; }
.push-btn { width: 76px; height: 25px; border: 1px solid; border-color: #fff #666 #666 #fff; box-shadow: inset -1px -1px #aaa; }
.push-btn.default { border-color: #666; box-shadow: inset -1px -1px #666, inset 1px 1px #fff; }
```
